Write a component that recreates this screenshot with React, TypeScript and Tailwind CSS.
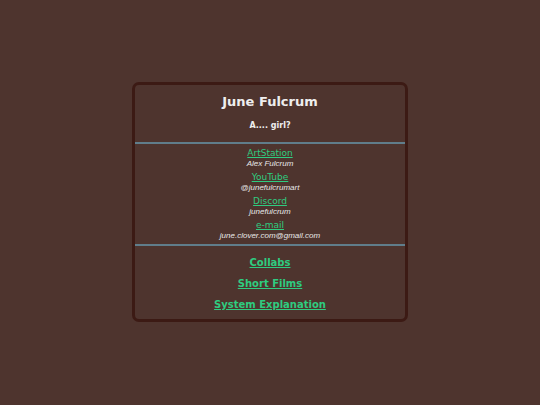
export default function App() {
  const socials = [
    { name: 'ArtStation', handle: 'Alex Fulcrum' },
    { name: 'YouTube', handle: '@junefulcrumart' },
    { name: 'Discord', handle: 'junefulcrum' },
    { name: 'e-mail', handle: 'june.clover.com@gmail.com' },
  ];
  const pages = ['Collabs', 'Short Films', 'System Explanation'];

  return (
    <main className="min-h-[405px] w-full bg-[#4e342e] flex justify-center pt-[82px] font-['DejaVu_Sans',sans-serif]">
      <div className="w-[276px] h-[240px] border-[3px] border-[#3c1a14] rounded-[7px] flex flex-col">
        <h1 className="text-center text-[13px] font-bold text-[#eeeeee] mt-[8px] leading-[18px]">June Fulcrum</h1>
        <p className="text-center text-[8px] font-bold text-[#eeeeee] mt-[10px] leading-[10px]">A.... girl?</p>
        <div className="h-[2px] bg-[#607d8b] mt-[11px]" />
        <ul className="flex flex-col items-center mt-[4px] gap-[4px]">
          {socials.map((s) => (
            <li key={s.name} className="flex flex-col items-center">
              <a href="#" className="text-[9px] leading-[11px] text-[#2ecc80] underline">{s.name}</a>
              <span className="text-[8px] leading-[9px] italic text-[#e8e8e8] font-['Liberation_Sans',sans-serif]">{s.handle}</span>
            </li>
          ))}
        </ul>
        <div className="h-[2px] bg-[#607d8b] mt-[4px]" />
        <nav className="flex flex-col items-center mt-[10px] gap-[8px]">
          {pages.map((p) => (
            <a key={p} href="#" className="text-[10px] leading-[13px] font-bold text-[#2ecc80] underline">{p}</a>
          ))}
        </nav>
      </div>
    </main>
  );
}
